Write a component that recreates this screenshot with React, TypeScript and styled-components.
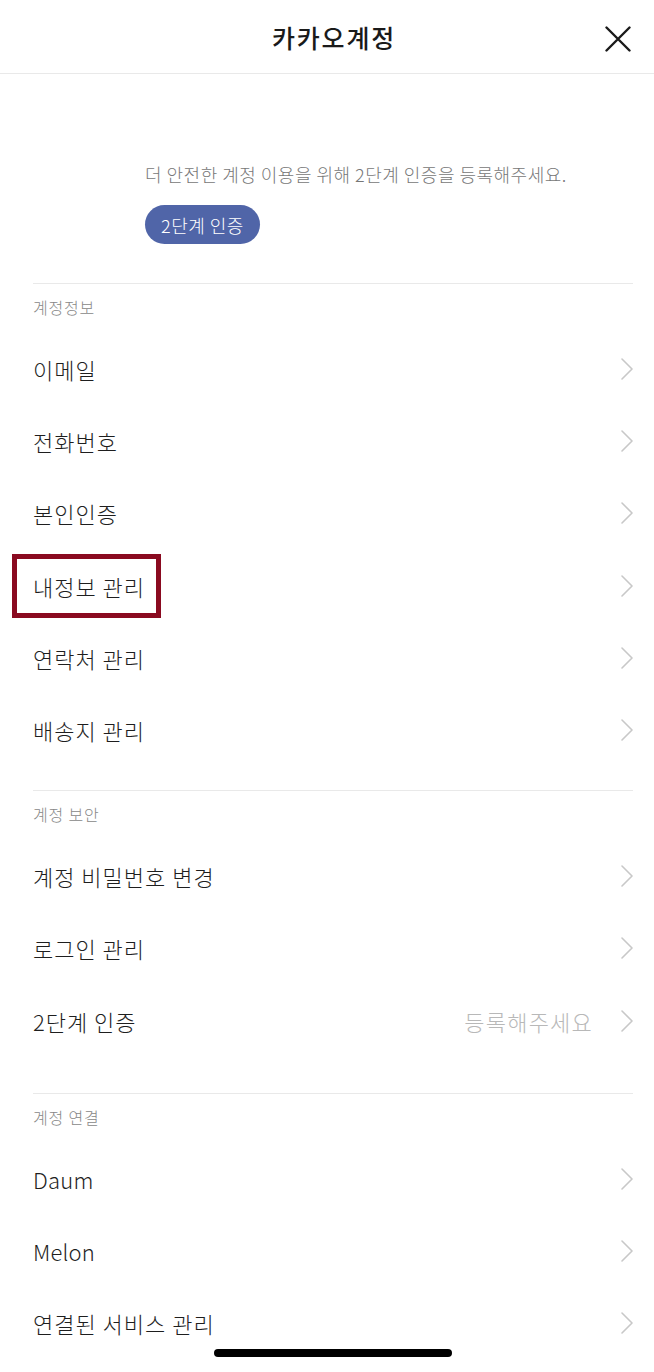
import React from 'react';
import styled, { createGlobalStyle } from 'styled-components';

const GlobalStyle = createGlobalStyle`
  html, body {
    margin: 0;
    padding: 0;
    background: #ffffff;
  }
  body {
    font-family: "Noto Sans CJK KR", "Noto Sans", sans-serif;
    color: #1e1e1e;
  }
`;

const Page = styled.div`
  width: 654px;
  min-height: 1372px;
  background: #ffffff;
`;

const Header = styled.header`
  position: relative;
  height: 73px;
  display: flex;
  align-items: center;
  justify-content: center;
  border-bottom: 1px solid #e9e9e9;
`;

const Title = styled.h1`
  margin: 0 0 0 14px;
  font-size: 25px;
  font-weight: 500;
  letter-spacing: 1.8px;
  color: #1a1a1a;
`;

const CloseButton = styled.button`
  position: absolute;
  right: 22px;
  top: 25px;
  width: 28px;
  height: 28px;
  padding: 0;
  border: none;
  background: none;
  display: flex;
  align-items: center;
  justify-content: center;
`;

const Banner = styled.div`
  padding: 87px 0 39px 145px;
  display: flex;
  flex-direction: column;
  align-items: flex-start;
  gap: 18px;
`;

const BannerText = styled.p`
  margin: 0;
  font-size: 18px;
  line-height: 26px;
  font-weight: 300;
  letter-spacing: 0.5px;
  color: #777777;
`;

const PillButton = styled.button`
  height: 39px;
  padding: 0 16px;
  border: none;
  border-radius: 20px;
  background: #5065a8;
  color: #ffffff;
  font-family: inherit;
  font-size: 18px;
  font-weight: 300;
  letter-spacing: 0.5px;
`;

const Section = styled.section<{ $bottom: number }>`
  margin: 0 21px 0 33px;
  border-top: 1px solid #e9e9e9;
  padding: 11px 0 ${p => p.$bottom}px;
`;

const SectionLabel = styled.div`
  font-size: 16px;
  line-height: 24px;
  font-weight: 300;
  letter-spacing: 0.8px;
  color: #888888;
  margin-bottom: 14px;
`;

const Row = styled.div`
  position: relative;
  height: 72.2px;
  display: flex;
  align-items: center;
  justify-content: space-between;
`;

const RowLabel = styled.span<{ $latin?: boolean }>`
  font-size: 22px;
  font-weight: 300;
  letter-spacing: ${p => (p.$latin ? '0.2px' : '1px')};
  color: #1e1e1e;
`;

const RowRight = styled.div`
  display: flex;
  align-items: center;
  gap: 28px;
`;

const RowHint = styled.span`
  font-size: 22px;
  font-weight: 300;
  color: #b8b8b8;
  letter-spacing: 1.2px;
`;

const Highlight = styled.div`
  position: absolute;
  left: -21px;
  width: 149px;
  top: 4px;
  bottom: 4px;
  box-sizing: border-box;
  border: 5px solid #8a0a20;
  pointer-events: none;
`;

const HomeIndicator = styled.div`
  position: fixed;
  left: 214px;
  top: 1349px;
  width: 238px;
  height: 8px;
  border-radius: 4px;
  background: #000000;
`;

const Chevron = () => (
  <svg width="12" height="22" viewBox="0 0 12 22" fill="none">
    <path d="M1 1l10 10L1 21" stroke="#c8c8c8" strokeWidth="1.6" strokeLinecap="round" strokeLinejoin="round" />
  </svg>
);

type Item = { label: string; hint?: string; highlight?: boolean; latin?: boolean };

const sections: { title: string; bottom: number; items: Item[] }[] = [
  {
    title: '계정정보',
    bottom: 24,
    items: [
      { label: '이메일' },
      { label: '전화번호' },
      { label: '본인인증' },
      { label: '내정보 관리', highlight: true },
      { label: '연락처 관리' },
      { label: '배송지 관리' },
    ],
  },
  {
    title: '계정 보안',
    bottom: 36,
    items: [
      { label: '계정 비밀번호 변경' },
      { label: '로그인 관리' },
      { label: '2단계 인증', hint: '등록해주세요' },
    ],
  },
  {
    title: '계정 연결',
    bottom: 10,
    items: [
      { label: 'Daum', latin: true },
      { label: 'Melon', latin: true },
      { label: '연결된 서비스 관리' },
    ],
  },
];

const App: React.FC = () => {
  return (
    <Page>
      <GlobalStyle />
      <Header>
        <Title>카카오계정</Title>
        <CloseButton aria-label="닫기">
          <svg width="26" height="26" viewBox="0 0 26 26" fill="none">
            <path d="M1.5 1.5l23 23M24.5 1.5l-23 23" stroke="#1a1a1a" strokeWidth="2.4" strokeLinecap="round" />
          </svg>
        </CloseButton>
      </Header>

      <Banner>
        <BannerText>더 안전한 계정 이용을 위해 2단계 인증을 등록해주세요.</BannerText>
        <PillButton>2단계 인증</PillButton>
      </Banner>

      {sections.map(section => (
        <Section key={section.title} $bottom={section.bottom}>
          <SectionLabel>{section.title}</SectionLabel>
          {section.items.map(item => (
            <Row key={item.label}>
              <RowLabel $latin={item.latin}>{item.label}</RowLabel>
              <RowRight>
                {item.hint && <RowHint>{item.hint}</RowHint>}
                <Chevron />
              </RowRight>
              {item.highlight && <Highlight />}
            </Row>
          ))}
        </Section>
      ))}

      <HomeIndicator />
    </Page>
  );
};

export default App;
